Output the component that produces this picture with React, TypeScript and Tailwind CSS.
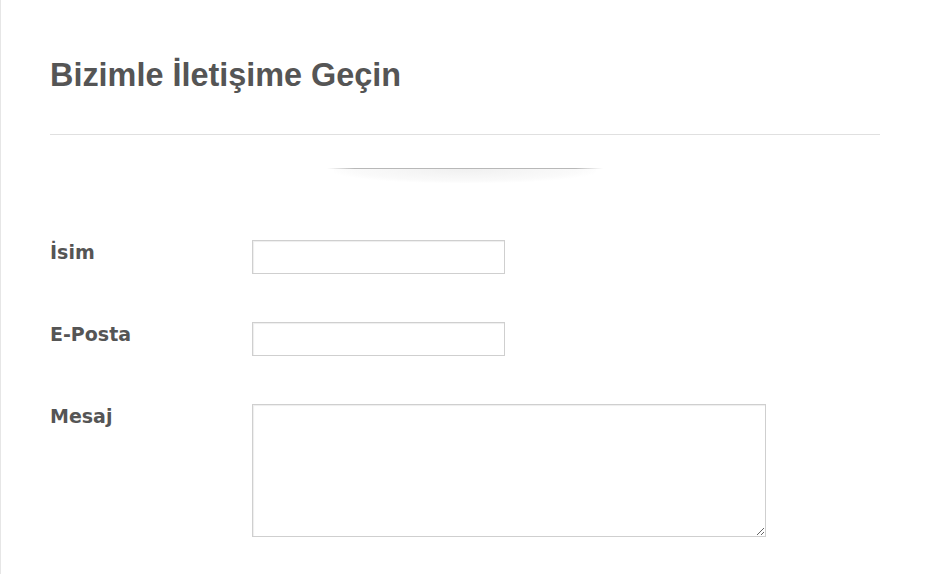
import React from 'react';

const fields = [
  { id: 'isim', label: 'İsim', type: 'text' },
  { id: 'eposta', label: 'E-Posta', type: 'email' },
];

export default function App() {
  return (
    <div className="min-h-[574px] w-full border-l border-[#e6e6e6] bg-white pl-[49px] pr-[50px]">
      {/* Header */}
      <h1 className="pt-[56px] text-[32.4px] leading-[38px] font-bold text-[#555] [font-family:'Liberation_Sans',Arial,sans-serif]">
        Bizimle İletişime Geçin
      </h1>
      <div className="mt-[40px] h-px bg-[#e0e0e0]" />

      {/* Decorative divider */}
      <div className="mt-[33px] flex justify-center">
        <div className="h-[18px] w-[276px]">
          <div className="h-px w-full bg-[linear-gradient(to_right,transparent,#b8b8b8_10%,#b8b8b8_90%,transparent)]" />
          <div className="mx-auto h-[14px] w-[262px] rounded-b-[50%] bg-[radial-gradient(ellipse_at_top,#f0f0f0,#fafafa_60%,transparent_75%)]" />
        </div>
      </div>

      {/* Form */}
      <form className="mt-[54px] flex flex-col gap-[48px] [font-family:'DejaVu_Sans',Verdana,sans-serif]">
        {fields.map((f) => (
          <div key={f.id} className="flex items-start">
            <label htmlFor={f.id} className="mt-[1px] w-[202px] shrink-0 text-[19px] leading-[23px] font-bold text-[#555]">
              {f.label}
            </label>
            <input
              id={f.id}
              type={f.type}
              className="h-[34px] w-[253px] border border-[#cfcfcf] bg-white px-2 shadow-[inset_1px_1px_1px_#eee] outline-none"
            />
          </div>
        ))}
        <div className="flex items-start">
          <label htmlFor="mesaj" className="mt-[1px] w-[202px] shrink-0 text-[19px] leading-[23px] font-bold text-[#555]">
            Mesaj
          </label>
          <textarea
            id="mesaj"
            className="h-[133px] w-[514px] border border-[#cfcfcf] bg-white p-2 shadow-[inset_1px_1px_1px_#eee] outline-none"
          />
        </div>
      </form>
    </div>
  );
}
